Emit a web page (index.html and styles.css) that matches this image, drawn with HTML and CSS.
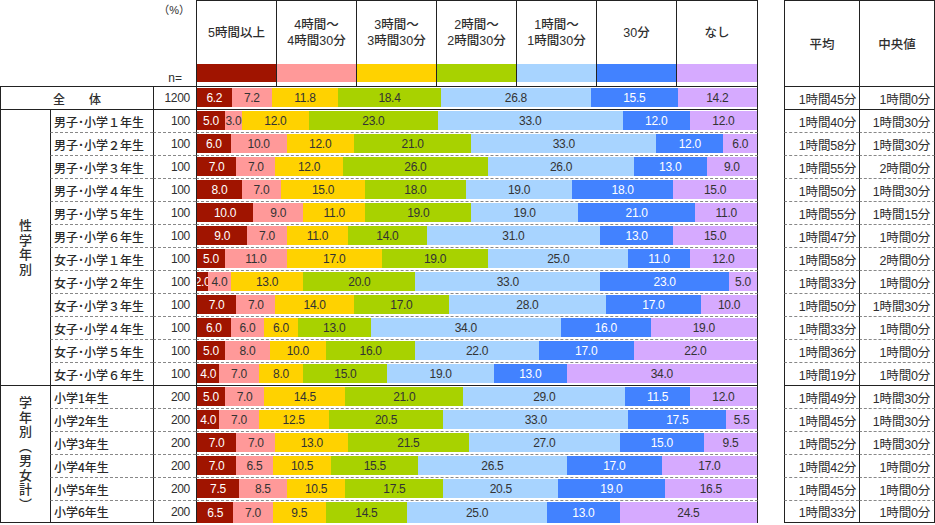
FILE: index.html
```html
<!DOCTYPE html>
<html lang="ja">
<head>
<meta charset="utf-8">
<title>学習時間</title>
<link rel="stylesheet" href="styles.css">
</head>
<body>
<div class="sheet">
  <div class="corner"><span class="pct">（%）</span><span class="nlab">n=</span></div>
  <div class="chead">
    <div class="hc"><div class="hl">5時間以上</div><div class="lg a"></div></div>
    <div class="hc"><div class="hl">4時間～<br>4時間30分</div><div class="lg b"></div></div>
    <div class="hc"><div class="hl">3時間～<br>3時間30分</div><div class="lg c"></div></div>
    <div class="hc"><div class="hl">2時間～<br>2時間30分</div><div class="lg d"></div></div>
    <div class="hc"><div class="hl">1時間～<br>1時間30分</div><div class="lg e"></div></div>
    <div class="hc"><div class="hl">30分</div><div class="lg f"></div></div>
    <div class="hc"><div class="hl">なし</div><div class="lg g"></div></div>
  </div>
  <div class="rh rh1">平均</div>
  <div class="rh rh2">中央値</div>

  <div class="total">全　　体</div>
  <div class="n s">1200</div>
  <div class="chart s"><div class="bar"><span class="a" style="flex:6.2">6.2</span><span class="b" style="flex:7.2">7.2</span><span class="c" style="flex:11.8">11.8</span><span class="d" style="flex:18.4">18.4</span><span class="e" style="flex:26.8">26.8</span><span class="f" style="flex:15.5">15.5</span><span class="g" style="flex:14.2">14.2</span></div></div>
  <div class="avg s">1時間45分</div><div class="med s">1時間0分</div>

  <div class="grp"><span class="vt">性学年別</span></div>
  <div class="name s">男子･小学１年生</div><div class="n s">100</div>
  <div class="chart s"><div class="bar"><span class="a" style="flex:5">5.0</span><span class="b" style="flex:3">3.0</span><span class="c" style="flex:12">12.0</span><span class="d" style="flex:23">23.0</span><span class="e" style="flex:33">33.0</span><span class="f" style="flex:12">12.0</span><span class="g" style="flex:12">12.0</span></div></div>
  <div class="avg s">1時間40分</div><div class="med s">1時間30分</div>

  <div class="name h">男子･小学２年生</div><div class="n h">100</div>
  <div class="chart h"><div class="bar"><span class="a" style="flex:6">6.0</span><span class="b" style="flex:10">10.0</span><span class="c" style="flex:12">12.0</span><span class="d" style="flex:21">21.0</span><span class="e" style="flex:33">33.0</span><span class="f" style="flex:12">12.0</span><span class="g" style="flex:6">6.0</span></div></div>
  <div class="avg h">1時間58分</div><div class="med h">1時間30分</div>

  <div class="name h">男子･小学３年生</div><div class="n h">100</div>
  <div class="chart h"><div class="bar"><span class="a" style="flex:7">7.0</span><span class="b" style="flex:7">7.0</span><span class="c" style="flex:12">12.0</span><span class="d" style="flex:26">26.0</span><span class="e" style="flex:26">26.0</span><span class="f" style="flex:13">13.0</span><span class="g" style="flex:9">9.0</span></div></div>
  <div class="avg h">1時間55分</div><div class="med h">2時間0分</div>

  <div class="name h">男子･小学４年生</div><div class="n h">100</div>
  <div class="chart h"><div class="bar"><span class="a" style="flex:8">8.0</span><span class="b" style="flex:7">7.0</span><span class="c" style="flex:15">15.0</span><span class="d" style="flex:18">18.0</span><span class="e" style="flex:19">19.0</span><span class="f" style="flex:18">18.0</span><span class="g" style="flex:15">15.0</span></div></div>
  <div class="avg h">1時間50分</div><div class="med h">1時間30分</div>

  <div class="name h">男子･小学５年生</div><div class="n h">100</div>
  <div class="chart h"><div class="bar"><span class="a" style="flex:10">10.0</span><span class="b" style="flex:9">9.0</span><span class="c" style="flex:11">11.0</span><span class="d" style="flex:19">19.0</span><span class="e" style="flex:19">19.0</span><span class="f" style="flex:21">21.0</span><span class="g" style="flex:11">11.0</span></div></div>
  <div class="avg h">1時間55分</div><div class="med h">1時間15分</div>

  <div class="name h">男子･小学６年生</div><div class="n h">100</div>
  <div class="chart h"><div class="bar"><span class="a" style="flex:9">9.0</span><span class="b" style="flex:7">7.0</span><span class="c" style="flex:11">11.0</span><span class="d" style="flex:14">14.0</span><span class="e" style="flex:31">31.0</span><span class="f" style="flex:13">13.0</span><span class="g" style="flex:15">15.0</span></div></div>
  <div class="avg h">1時間47分</div><div class="med h">1時間0分</div>

  <div class="name h">女子･小学１年生</div><div class="n h">100</div>
  <div class="chart h"><div class="bar"><span class="a" style="flex:5">5.0</span><span class="b" style="flex:11">11.0</span><span class="c" style="flex:17">17.0</span><span class="d" style="flex:19">19.0</span><span class="e" style="flex:25">25.0</span><span class="f" style="flex:11">11.0</span><span class="g" style="flex:12">12.0</span></div></div>
  <div class="avg h">1時間58分</div><div class="med h">2時間0分</div>

  <div class="name h">女子･小学２年生</div><div class="n h">100</div>
  <div class="chart h"><div class="bar"><span class="a" style="flex:2">2.0</span><span class="b" style="flex:4">4.0</span><span class="c" style="flex:13">13.0</span><span class="d" style="flex:20">20.0</span><span class="e" style="flex:33">33.0</span><span class="f" style="flex:23">23.0</span><span class="g" style="flex:5">5.0</span></div></div>
  <div class="avg h">1時間33分</div><div class="med h">1時間0分</div>

  <div class="name h">女子･小学３年生</div><div class="n h">100</div>
  <div class="chart h"><div class="bar"><span class="a" style="flex:7">7.0</span><span class="b" style="flex:7">7.0</span><span class="c" style="flex:14">14.0</span><span class="d" style="flex:17">17.0</span><span class="e" style="flex:28">28.0</span><span class="f" style="flex:17">17.0</span><span class="g" style="flex:10">10.0</span></div></div>
  <div class="avg h">1時間50分</div><div class="med h">1時間30分</div>

  <div class="name h">女子･小学４年生</div><div class="n h">100</div>
  <div class="chart h"><div class="bar"><span class="a" style="flex:6">6.0</span><span class="b" style="flex:6">6.0</span><span class="c" style="flex:6">6.0</span><span class="d" style="flex:13">13.0</span><span class="e" style="flex:34">34.0</span><span class="f" style="flex:16">16.0</span><span class="g" style="flex:19">19.0</span></div></div>
  <div class="avg h">1時間33分</div><div class="med h">1時間0分</div>

  <div class="name h">女子･小学５年生</div><div class="n h">100</div>
  <div class="chart h"><div class="bar"><span class="a" style="flex:5">5.0</span><span class="b" style="flex:8">8.0</span><span class="c" style="flex:10">10.0</span><span class="d" style="flex:16">16.0</span><span class="e" style="flex:22">22.0</span><span class="f" style="flex:17">17.0</span><span class="g" style="flex:22">22.0</span></div></div>
  <div class="avg h">1時間36分</div><div class="med h">1時間0分</div>

  <div class="name h">女子･小学６年生</div><div class="n h">100</div>
  <div class="chart h"><div class="bar"><span class="a" style="flex:4">4.0</span><span class="b" style="flex:7">7.0</span><span class="c" style="flex:8">8.0</span><span class="d" style="flex:15">15.0</span><span class="e" style="flex:19">19.0</span><span class="f" style="flex:13">13.0</span><span class="g" style="flex:34">34.0</span></div></div>
  <div class="avg h">1時間19分</div><div class="med h">1時間0分</div>

  <div class="grp grp2"><span class="vt">学年別（男女計）</span></div>
  <div class="name s">小学1年生</div><div class="n s">200</div>
  <div class="chart s"><div class="bar"><span class="a" style="flex:5">5.0</span><span class="b" style="flex:7">7.0</span><span class="c" style="flex:14.5">14.5</span><span class="d" style="flex:21">21.0</span><span class="e" style="flex:29">29.0</span><span class="f" style="flex:11.5">11.5</span><span class="g" style="flex:12">12.0</span></div></div>
  <div class="avg s">1時間49分</div><div class="med s">1時間30分</div>

  <div class="name h">小学2年生</div><div class="n h">200</div>
  <div class="chart h"><div class="bar"><span class="a" style="flex:4">4.0</span><span class="b" style="flex:7">7.0</span><span class="c" style="flex:12.5">12.5</span><span class="d" style="flex:20.5">20.5</span><span class="e" style="flex:33">33.0</span><span class="f" style="flex:17.5">17.5</span><span class="g" style="flex:5.5">5.5</span></div></div>
  <div class="avg h">1時間45分</div><div class="med h">1時間30分</div>

  <div class="name h">小学3年生</div><div class="n h">200</div>
  <div class="chart h"><div class="bar"><span class="a" style="flex:7">7.0</span><span class="b" style="flex:7">7.0</span><span class="c" style="flex:13">13.0</span><span class="d" style="flex:21.5">21.5</span><span class="e" style="flex:27">27.0</span><span class="f" style="flex:15">15.0</span><span class="g" style="flex:9.5">9.5</span></div></div>
  <div class="avg h">1時間52分</div><div class="med h">1時間30分</div>

  <div class="name h">小学4年生</div><div class="n h">200</div>
  <div class="chart h"><div class="bar"><span class="a" style="flex:7">7.0</span><span class="b" style="flex:6.5">6.5</span><span class="c" style="flex:10.5">10.5</span><span class="d" style="flex:15.5">15.5</span><span class="e" style="flex:26.5">26.5</span><span class="f" style="flex:17">17.0</span><span class="g" style="flex:17">17.0</span></div></div>
  <div class="avg h">1時間42分</div><div class="med h">1時間0分</div>

  <div class="name h">小学5年生</div><div class="n h">200</div>
  <div class="chart h"><div class="bar"><span class="a" style="flex:7.5">7.5</span><span class="b" style="flex:8.5">8.5</span><span class="c" style="flex:10.5">10.5</span><span class="d" style="flex:17.5">17.5</span><span class="e" style="flex:20.5">20.5</span><span class="f" style="flex:19">19.0</span><span class="g" style="flex:16.5">16.5</span></div></div>
  <div class="avg h">1時間45分</div><div class="med h">1時間0分</div>

  <div class="name h z">小学6年生</div><div class="n h z">200</div>
  <div class="chart h last"><div class="bar"><span class="a" style="flex:6.5">6.5</span><span class="b" style="flex:7">7.0</span><span class="c" style="flex:9.5">9.5</span><span class="d" style="flex:14.5">14.5</span><span class="e" style="flex:25">25.0</span><span class="f" style="flex:13">13.0</span><span class="g" style="flex:24.5">24.5</span></div></div>
  <div class="avg h z">1時間33分</div><div class="med h z">1時間0分</div>
</div>
</body>
</html>
```

FILE: styles.css
```css
* { box-sizing: border-box; margin: 0; padding: 0; }
html, body { width: 935px; height: 525px; overflow: hidden; background: #fff; }
body {
  font-family: "Liberation Sans", "Noto Sans CJK JP", sans-serif;
  font-size: 12px;
  color: #2e2e2e;
}
.sheet {
  display: grid;
  grid-template-columns: 50px 103px 43px 562px 26px 75px 76px;
  grid-template-rows: 86px repeat(19, 23px);
}

/* header */
.corner {
  grid-column: 1 / 4;
  grid-row: 1;
  display: flex;
  flex-direction: column;
  justify-content: space-between;
  align-items: flex-end;
  padding-top: 3px;
  line-height: 15px;
}
.pct { padding-right: 6px; font-size: 11px; }
.nlab { padding-right: 14px; }

.chead {
  grid-column: 4;
  grid-row: 1;
  display: flex;
  border-top: 1px solid #222;
  border-left: 1px solid #222;
  border-right: 1px solid #222;
}
.hc {
  width: 80px;
  display: flex;
  flex-direction: column;
  border-right: 1px solid #222;
}
.hc:last-child { border-right: 0; }
.hl {
  height: 63px;
  display: flex;
  align-items: center;
  justify-content: center;
  text-align: center;
  line-height: 16px;
  font-size: 12.5px;
  font-weight: 500;
}
.lg { height: 18px; }

.rh {
  grid-row: 1;
  border-top: 1px solid #222;
  border-left: 1px solid #222;
  display: flex;
  align-items: center;
  justify-content: center;
  font-size: 12.5px;
  font-weight: 500;
}
.rh1 { grid-column: 6; }
.rh2 { grid-column: 7; border-right: 1px solid #222; }

/* body cells */
.total, .name, .n, .avg, .med {
  display: flex;
  align-items: center;
  white-space: nowrap;
}
.total {
  grid-column: 1 / 3;
  justify-content: center;
  border-top: 1px solid #222;
  border-left: 1px solid #222;
  font-weight: 500;
}
.grp {
  grid-column: 1;
  grid-row: span 12;
  border-top: 1px solid #222;
  border-left: 1px solid #222;
  display: flex;
  align-items: center;
  justify-content: center;
}
.grp2 { grid-row: span 6; border-bottom: 1px solid #222; }
.vt {
  writing-mode: vertical-rl;
  font-family: "Noto Sans CJK JP", sans-serif;
  font-size: 13px;
  font-weight: 500;
  letter-spacing: 1.5px;
  line-height: 1;
}
.name {
  grid-column: 2;
  border-left: 1px solid #222;
  padding-left: 3px;
  font-family: "Noto Sans CJK JP", sans-serif;
  font-size: 12px;
  font-weight: 500;
  color: #2a2a2a;
}
.n {
  grid-column: 3;
  border-left: 1px solid #222;
  justify-content: flex-end;
  padding-right: 6px;
  letter-spacing: -0.3px;
}
.chart {
  grid-column: 4;
  border-left: 1px solid #222;
  border-right: 1px solid #222;
}
.avg, .med { font-size: 12.5px; letter-spacing: -0.2px; }
.avg {
  grid-column: 6;
  border-left: 1px solid #222;
  justify-content: flex-end;
  padding-right: 3px;
}
.med {
  grid-column: 7;
  border-left: 1px solid #222;
  border-right: 1px solid #222;
  justify-content: flex-end;
  padding-right: 4px;
}
.s { border-top: 1px solid #222; }
.h { border-top: 1px dashed #888; }
.z { border-bottom: 1px solid #222; }

/* bars */
.bar {
  display: flex;
  height: 19px;
  margin-top: 1px;
  overflow: hidden;
  font-size: 12px;
  letter-spacing: -0.3px;
}
.last .bar { height: 21px; }
.bar span {
  min-width: 0;
  display: flex;
  align-items: center;
  justify-content: center;
  white-space: nowrap;
  color: #333;
}
.a { background: #a01400; }
.b { background: #ff9999; }
.c { background: #ffd200; }
.d { background: #a8d200; }
.e { background: #a8d4ff; }
.f { background: #4282ff; }
.g { background: #d6aaff; }
.bar .a, .bar .f { color: #fff; }
```
